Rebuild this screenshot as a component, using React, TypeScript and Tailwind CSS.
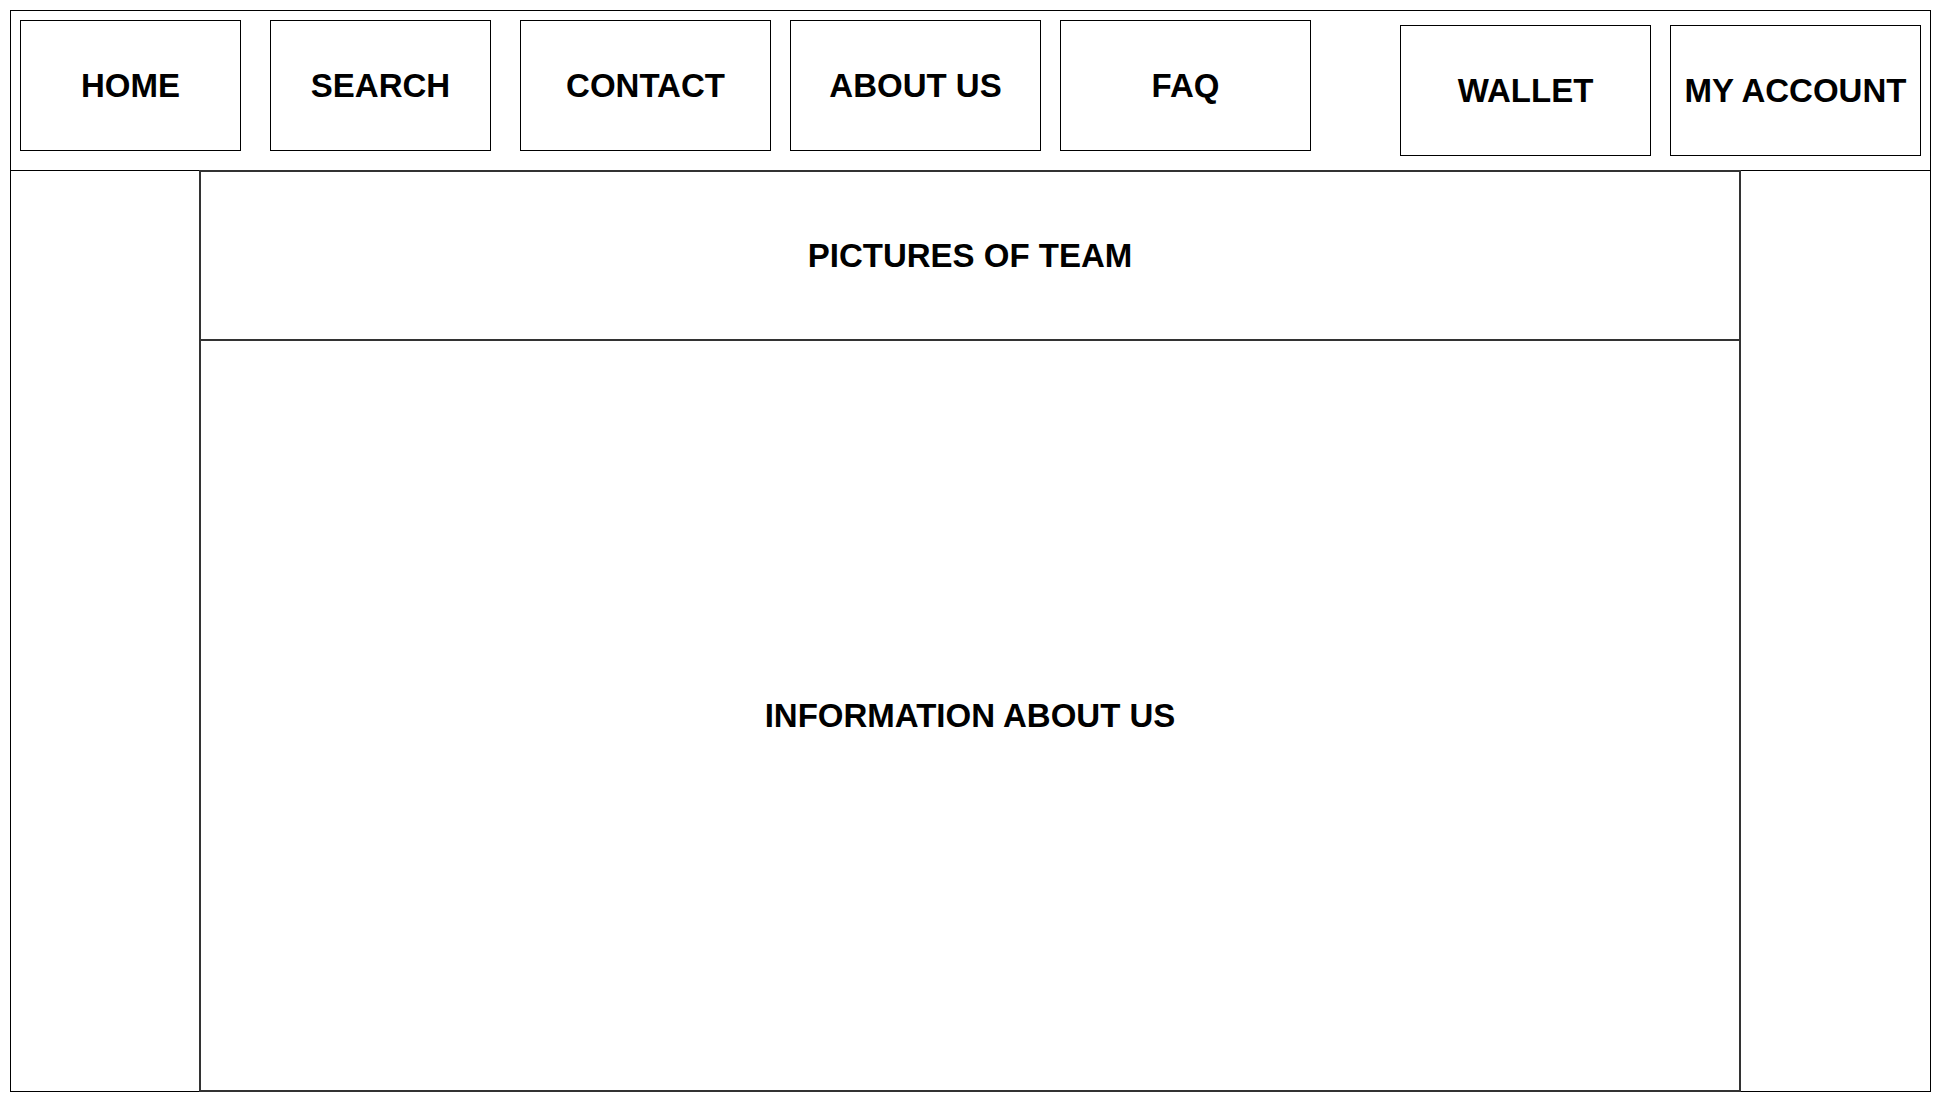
import React from 'react';

const leftNav = [
  { label: 'HOME', width: 'w-[221px]' },
  { label: 'SEARCH', width: 'w-[221px]' },
  { label: 'CONTACT', width: 'w-[251px]' },
  { label: 'ABOUT US', width: 'w-[251px]' },
  { label: 'FAQ', width: 'w-[251px]' },
];

const rightNav = ['WALLET', 'MY ACCOUNT'];

const NavBox: React.FC<{ label: string; className?: string }> = ({ label, className }) => (
  <div
    className={`flex h-[131px] items-center justify-center border border-black text-[33px] font-bold text-black ${className ?? ''}`}
  >
    {label}
  </div>
);

export default function App() {
  return (
    <div
      className="h-[1102px] w-[1941px] bg-white pl-[10px] pt-[10px]"
      style={{ fontFamily: '"Liberation Sans", Arial, sans-serif' }}
    >
      <div className="flex h-[1082px] w-[1921px] flex-col border border-black">
        {/* Header */}
        <header className="flex h-[160px] shrink-0 items-start border-b border-black">
          <div className="ml-[9px] mt-[9px] flex">
            {leftNav.map((item, i) => (
              <NavBox
                key={item.label}
                label={item.label}
                className={`${item.width} ${i === 0 ? '' : i < 3 ? 'ml-[29px]' : 'ml-[19px]'}`}
              />
            ))}
          </div>
          <div className="ml-auto mr-[9px] mt-[14px] flex gap-[19px]">
            {rightNav.map((label) => (
              <NavBox key={label} label={label} className="w-[251px]" />
            ))}
          </div>
        </header>

        {/* Body */}
        <main className="flex flex-1 pl-[188px]">
          <div className="-mt-px -mb-px flex w-[1542px] flex-col border-2 border-[#333]">
            <section className="flex h-[169px] shrink-0 items-center justify-center border-b-2 border-[#333] text-[33px] font-bold text-black">
              PICTURES OF TEAM
            </section>
            <section className="flex flex-1 items-center justify-center text-[33px] font-bold text-black">
              INFORMATION ABOUT US
            </section>
          </div>
        </main>
      </div>
    </div>
  );
}
